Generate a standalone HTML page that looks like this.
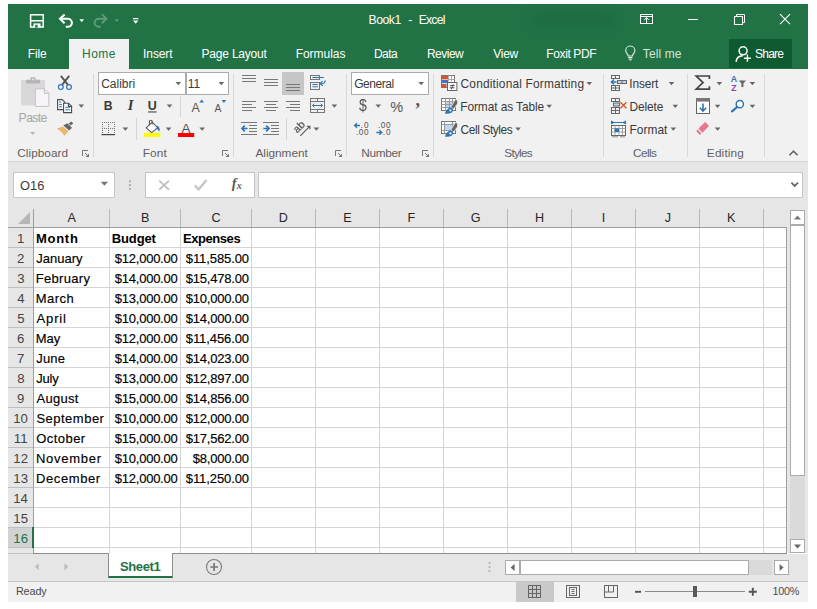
<!DOCTYPE html>
<html lang="en"><head><meta charset="utf-8"><title>Book1 - Excel</title>
<style>
html,body{margin:0;padding:0;background:#fff;}
body{width:817px;height:609px;position:relative;overflow:hidden;font-family:"Liberation Sans", sans-serif;}
.t{position:absolute;display:block;white-space:pre;line-height:20px;height:20px;font-family:"Liberation Sans", sans-serif;}
.k{-webkit-text-stroke:0.16px currentColor;}
.a{position:absolute;box-sizing:border-box;}
</style></head><body>
<div class="a" style="left:8px;top:4px;width:800px;height:65px;background:#217346;"></div>
<div class="a" style="left:69px;top:39px;width:60px;height:30px;background:#f1f1f1;"></div>
<div class="a" style="left:8px;top:4px;width:800px;height:35px;overflow:hidden;"><div class="a" style="left:522px;top:6px;width:88px;height:19px;background:#1d6a40;filter:blur(4px);opacity:.55;border-radius:8px;"></div></div>
<div class="a" style="left:729px;top:39px;width:63px;height:29px;background:#0f5b31;"></div>
<div class="a" style="left:8px;top:69px;width:800px;height:92px;background:#f1f1f1;"></div>
<div class="a" style="left:8px;top:161px;width:800px;height:1px;background:#d4d4d4;"></div>
<div class="a" style="left:8px;top:162px;width:800px;height:46px;background:#e6e6e6;"></div>
<div class="a" style="left:8px;top:208px;width:800px;height:345px;background:#e6e6e6;"></div>
<div class="a" style="left:8px;top:554px;width:800px;height:27px;background:#e6e6e6;"></div>
<div class="a" style="left:8px;top:581px;width:800px;height:1px;background:#c6c6c6;"></div>
<div class="a" style="left:8px;top:582px;width:800px;height:20px;background:#f1f1f1;"></div>
<div class="a" style="left:93px;top:74px;width:1px;height:83px;background:#d8d8d8;"></div>
<div class="a" style="left:233px;top:74px;width:1px;height:83px;background:#d8d8d8;"></div>
<div class="a" style="left:346px;top:74px;width:1px;height:83px;background:#d8d8d8;"></div>
<div class="a" style="left:433px;top:74px;width:1px;height:83px;background:#d8d8d8;"></div>
<div class="a" style="left:603px;top:74px;width:1px;height:83px;background:#d8d8d8;"></div>
<div class="a" style="left:687px;top:74px;width:1px;height:83px;background:#d8d8d8;"></div>
<div class="a" style="left:764px;top:74px;width:1px;height:83px;background:#d8d8d8;"></div>
<div class="a" style="left:180px;top:96px;width:1px;height:21px;background:#d4d4d4;"></div>
<div class="a" style="left:136px;top:118px;width:1px;height:22px;background:#d4d4d4;"></div>
<div class="a" style="left:286px;top:118px;width:1px;height:22px;background:#d4d4d4;"></div>
<div class="a" style="left:282px;top:72px;width:22px;height:23px;background:#c6c6c6;"></div>
<div class="a" style="left:98px;top:72px;width:88px;height:23px;background:#fff;border:1px solid #ababab;"></div>
<div class="a" style="left:186px;top:72px;width:43px;height:23px;background:#fff;border:1px solid #ababab;"></div>
<div class="a" style="left:351px;top:72px;width:78px;height:23px;background:#fff;border:1px solid #ababab;"></div>
<div class="a" style="left:13px;top:172px;width:102px;height:26px;background:#fff;border:1px solid #c6c6c6;"></div>
<div class="a" style="left:145px;top:172px;width:110px;height:26px;background:#fff;border:1px solid #c6c6c6;"></div>
<div class="a" style="left:258px;top:172px;width:545px;height:26px;background:#fff;border:1px solid #c6c6c6;"></div>
<div class="a" style="left:34px;top:228px;width:753px;height:326px;background:#fff;"></div>
<div class="a" style="left:8px;top:528px;width:26px;height:20px;background:#d2d2d2;"></div>
<div class="a" style="left:34px;top:247px;width:753px;height:1px;background:#d4d4d4;"></div>
<div class="a" style="left:8px;top:247px;width:25px;height:1px;background:#bfbfbf;"></div>
<div class="a" style="left:34px;top:267px;width:753px;height:1px;background:#d4d4d4;"></div>
<div class="a" style="left:8px;top:267px;width:25px;height:1px;background:#bfbfbf;"></div>
<div class="a" style="left:34px;top:287px;width:753px;height:1px;background:#d4d4d4;"></div>
<div class="a" style="left:8px;top:287px;width:25px;height:1px;background:#bfbfbf;"></div>
<div class="a" style="left:34px;top:307px;width:753px;height:1px;background:#d4d4d4;"></div>
<div class="a" style="left:8px;top:307px;width:25px;height:1px;background:#bfbfbf;"></div>
<div class="a" style="left:34px;top:327px;width:753px;height:1px;background:#d4d4d4;"></div>
<div class="a" style="left:8px;top:327px;width:25px;height:1px;background:#bfbfbf;"></div>
<div class="a" style="left:34px;top:347px;width:753px;height:1px;background:#d4d4d4;"></div>
<div class="a" style="left:8px;top:347px;width:25px;height:1px;background:#bfbfbf;"></div>
<div class="a" style="left:34px;top:367px;width:753px;height:1px;background:#d4d4d4;"></div>
<div class="a" style="left:8px;top:367px;width:25px;height:1px;background:#bfbfbf;"></div>
<div class="a" style="left:34px;top:387px;width:753px;height:1px;background:#d4d4d4;"></div>
<div class="a" style="left:8px;top:387px;width:25px;height:1px;background:#bfbfbf;"></div>
<div class="a" style="left:34px;top:407px;width:753px;height:1px;background:#d4d4d4;"></div>
<div class="a" style="left:8px;top:407px;width:25px;height:1px;background:#bfbfbf;"></div>
<div class="a" style="left:34px;top:427px;width:753px;height:1px;background:#d4d4d4;"></div>
<div class="a" style="left:8px;top:427px;width:25px;height:1px;background:#bfbfbf;"></div>
<div class="a" style="left:34px;top:447px;width:753px;height:1px;background:#d4d4d4;"></div>
<div class="a" style="left:8px;top:447px;width:25px;height:1px;background:#bfbfbf;"></div>
<div class="a" style="left:34px;top:467px;width:753px;height:1px;background:#d4d4d4;"></div>
<div class="a" style="left:8px;top:467px;width:25px;height:1px;background:#bfbfbf;"></div>
<div class="a" style="left:34px;top:487px;width:753px;height:1px;background:#d4d4d4;"></div>
<div class="a" style="left:8px;top:487px;width:25px;height:1px;background:#bfbfbf;"></div>
<div class="a" style="left:34px;top:507px;width:753px;height:1px;background:#d4d4d4;"></div>
<div class="a" style="left:8px;top:507px;width:25px;height:1px;background:#bfbfbf;"></div>
<div class="a" style="left:34px;top:527px;width:753px;height:1px;background:#d4d4d4;"></div>
<div class="a" style="left:8px;top:527px;width:25px;height:1px;background:#bfbfbf;"></div>
<div class="a" style="left:34px;top:547px;width:753px;height:1px;background:#d4d4d4;"></div>
<div class="a" style="left:8px;top:547px;width:25px;height:1px;background:#bfbfbf;"></div>
<div class="a" style="left:109px;top:228px;width:1px;height:326px;background:#d4d4d4;"></div>
<div class="a" style="left:109px;top:209px;width:1px;height:19px;background:#b9b9b9;"></div>
<div class="a" style="left:180px;top:228px;width:1px;height:326px;background:#d4d4d4;"></div>
<div class="a" style="left:180px;top:209px;width:1px;height:19px;background:#b9b9b9;"></div>
<div class="a" style="left:251px;top:228px;width:1px;height:326px;background:#d4d4d4;"></div>
<div class="a" style="left:251px;top:209px;width:1px;height:19px;background:#b9b9b9;"></div>
<div class="a" style="left:315px;top:228px;width:1px;height:326px;background:#d4d4d4;"></div>
<div class="a" style="left:315px;top:209px;width:1px;height:19px;background:#b9b9b9;"></div>
<div class="a" style="left:379px;top:228px;width:1px;height:326px;background:#d4d4d4;"></div>
<div class="a" style="left:379px;top:209px;width:1px;height:19px;background:#b9b9b9;"></div>
<div class="a" style="left:443px;top:228px;width:1px;height:326px;background:#d4d4d4;"></div>
<div class="a" style="left:443px;top:209px;width:1px;height:19px;background:#b9b9b9;"></div>
<div class="a" style="left:507px;top:228px;width:1px;height:326px;background:#d4d4d4;"></div>
<div class="a" style="left:507px;top:209px;width:1px;height:19px;background:#b9b9b9;"></div>
<div class="a" style="left:571px;top:228px;width:1px;height:326px;background:#d4d4d4;"></div>
<div class="a" style="left:571px;top:209px;width:1px;height:19px;background:#b9b9b9;"></div>
<div class="a" style="left:635px;top:228px;width:1px;height:326px;background:#d4d4d4;"></div>
<div class="a" style="left:635px;top:209px;width:1px;height:19px;background:#b9b9b9;"></div>
<div class="a" style="left:699px;top:228px;width:1px;height:326px;background:#d4d4d4;"></div>
<div class="a" style="left:699px;top:209px;width:1px;height:19px;background:#b9b9b9;"></div>
<div class="a" style="left:763px;top:228px;width:1px;height:326px;background:#d4d4d4;"></div>
<div class="a" style="left:763px;top:209px;width:1px;height:19px;background:#b9b9b9;"></div>
<div class="a" style="left:8px;top:227px;width:779px;height:1px;background:#9e9e9e;"></div>
<div class="a" style="left:33px;top:209px;width:1px;height:345px;background:#9e9e9e;"></div>
<div class="a" style="left:32px;top:527px;width:2px;height:21px;background:#217346;"></div>
<div class="a" style="left:786px;top:228px;width:1px;height:326px;background:#9e9e9e;"></div>
<div class="a" style="left:8px;top:553px;width:25px;height:1px;background:#c2c2c2;"></div>
<div class="a" style="left:33px;top:553px;width:76px;height:1px;background:#8e8e8e;"></div>
<div class="a" style="left:173px;top:553px;width:614px;height:1px;background:#8e8e8e;"></div>
<div class="a" style="left:790px;top:210px;width:15px;height:343px;background:#dadada;"></div>
<div class="a" style="left:790px;top:210px;width:15px;height:15px;background:#fff;border:1px solid #ababab;"></div>
<div class="a" style="left:790px;top:225px;width:15px;height:251px;background:#fff;border:1px solid #ababab;"></div>
<div class="a" style="left:790px;top:539px;width:15px;height:14px;background:#fff;border:1px solid #ababab;"></div>
<div class="a" style="left:505px;top:560px;width:267px;height:15px;background:#dadada;"></div>
<div class="a" style="left:505px;top:560px;width:15px;height:15px;background:#fff;border:1px solid #ababab;"></div>
<div class="a" style="left:520px;top:560px;width:229px;height:15px;background:#fff;border:1px solid #ababab;"></div>
<div class="a" style="left:774px;top:560px;width:15px;height:15px;background:#fff;border:1px solid #ababab;"></div>
<div class="a" style="left:108px;top:553px;width:65px;height:25px;background:#fff;border-left:1px solid #8e8e8e;border-right:1px solid #8e8e8e;border-bottom:2px solid #217346;"></div>
<div class="a" style="left:516px;top:582px;width:38px;height:20px;background:#c9c9c9;"></div>
<div class="a" style="left:645px;top:591px;width:100px;height:1px;background:#8a8a8a;"></div>
<div class="a" style="left:693px;top:586px;width:4px;height:11px;background:#5a5a5a;"></div>
<svg class="a" style="left:0;top:0" width="817" height="609" viewBox="0 0 817 609">
<g fill="none" stroke="#fff" stroke-width="1.5"><rect x="30.6" y="14.8" width="12.6" height="12.2"/><path d="M30.6,20.8H43.2"/></g>
<rect x="33.4" y="23.4" width="7.2" height="4" fill="#fff"/><rect x="35.2" y="24.8" width="2.4" height="2.9" fill="#217346"/>
<g fill="none" stroke="#fff" stroke-width="2.1" stroke-linejoin="miter"><path d="M64.6,14.4L60,18.8L64.6,23.2"/><path d="M60.4,18.8H67.6a4.3,4 0 0 1 0,8H65.8"/></g>
<path d="M79.40,19.20h4.6l-2.30,3.0z" fill="#fff"/>
<g fill="none" stroke="#5d9b79" stroke-width="1.9"><path d="M101.9,14.4L106.5,18.8L101.9,23.2"/><path d="M106.1,18.8H98.9a4.3,4 0 0 0 0,8H100.7"/></g>
<path d="M114.60,19.30h4.4l-2.20,2.8z" fill="#5d9b79"/>
<rect x="133" y="18" width="5.4" height="1.2" fill="#fff"/>
<path d="M133.00,20.60h5.4l-2.70,3.2z" fill="#fff"/>
<g fill="none" stroke="#fff" stroke-width="1"><rect x="640.5" y="14.5" width="12" height="9"/><path d="M640.5,16.5h12"/><path d="M646.5,23.5v-6M644.2,20l2.3,-2.3l2.3,2.3"/></g>
<rect x="688" y="19" width="10" height="1" fill="#fff"/>
<g fill="none" stroke="#fff" stroke-width="1"><path d="M736.5,16.5v-2h8v8h-2"/><rect x="734.5" y="16.5" width="8" height="8"/></g>
<path d="M780,14.2l10,10M790,14.2l-10,10" stroke="#fff" stroke-width="1.1" fill="none"/>
<g fill="none" stroke="#e4efe8" stroke-width="1.1"><path d="M628.2,56c0,-1.8 -2.5,-2.6 -2.5,-5.4a4.6,4.6 0 0 1 9.2,0c0,2.8 -2.5,3.6 -2.5,5.4z"/><path d="M628.2,57.7h4.2" stroke-width="1.5"/><path d="M628.9,59.8h2.8"/></g>
<g fill="none" stroke="#fff" stroke-width="1.5"><circle cx="743.1" cy="50.8" r="4"/><path d="M736.1,61.8c0.4,-3.8 2.8,-5.8 6.6,-6"/><path d="M747.4,54.6v7.2M743.9,58.2h7" stroke-width="1.4"/></g>
<rect x="21" y="80" width="24" height="25.4" rx="1.6" fill="#dad7da"/>
<path d="M26,83.6v-3.8h4.4v-1.4a1.2,1.2 0 0 1 1.2,-1.2h2.8a1.2,1.2 0 0 1 1.2,1.2v1.4h4.4v3.8z" fill="#b7b4b8"/>
<rect x="32.2" y="78.6" width="1.8" height="1.6" fill="#efecef"/>
<path d="M35.3,88.8h9l4.6,4.6v13h-13.6z" fill="#f7f4f7" stroke="#c3c1c3" stroke-width="1"/>
<path d="M44.3,88.8v4.6h4.6" fill="none" stroke="#c3c1c3" stroke-width="1"/>
<path d="M30.20,131.90h5l-2.50,3z" fill="#b5b5b5"/>
<g fill="none" stroke="#555" stroke-width="1.9"><path d="M60.9,75.8L68,84.8M69.2,75.8L62.1,84.8"/></g>
<g fill="none" stroke="#2e75b6" stroke-width="1.2"><circle cx="60.8" cy="87.1" r="2.4"/><circle cx="69" cy="87.1" r="2.4"/></g>
<g fill="#fff" stroke="#4a4a4a" stroke-width="1.1"><path d="M57.6,99.6h4.6l2.6,2.6v7.4h-7.2z"/><path d="M63.6,103.2h5l3,3v6.4h-8z"/><path d="M68.4,103.4v3h3" fill="none"/></g>
<g stroke="#2e75b6" stroke-width="1"><path d="M59,102h2M59,104.4h3M59,106.8h3M65.4,107.3h4.6M65.4,109.8h4.6"/></g>
<path d="M78.50,104.60h5.6l-2.80,3.2z" fill="#666"/>
<path d="M57,128.5L62.8,126.5L68.6,131.2L64.4,135.8Q61,131 57,128.5z" fill="#e9b96e"/>
<path d="M63.3,125.6L67.3,123.2L72,127.8L69.2,130.4z" fill="#666"/>
<path d="M68.6,123.4L71.3,121.6L73.3,123.5L70.6,125.6z" fill="#666"/>
<path d="M82.5,156V150.5H88" fill="none" stroke="#777" stroke-width="1"/>
<path d="M85,153L88,156" stroke="#777" stroke-width="1"/>
<path d="M89,153.5V157H85.5z" fill="#777"/>
<path d="M175.50,82.10h5.6l-2.80,3.2z" fill="#666"/>
<path d="M218.60,82.10h5.6l-2.80,3.2z" fill="#666"/>
<rect x="148" y="111.4" width="8.6" height="1.1" fill="#444"/>
<path d="M166.70,104.60h5.6l-2.80,3.2z" fill="#666"/>
<path d="M199.4,102.6h4.6l-2.3,-3.2z" fill="#2e75b6"/>
<path d="M221.6,100h4.6l-2.3,3z" fill="#2e75b6"/>
<rect x="102" y="122" width="1" height="1" fill="#777"/>
<rect x="104" y="122" width="1" height="1" fill="#777"/>
<rect x="106" y="122" width="1" height="1" fill="#777"/>
<rect x="108" y="122" width="1" height="1" fill="#777"/>
<rect x="110" y="122" width="1" height="1" fill="#777"/>
<rect x="112" y="122" width="1" height="1" fill="#777"/>
<rect x="114" y="122" width="1" height="1" fill="#777"/>
<rect x="102" y="128" width="1" height="1" fill="#777"/>
<rect x="104" y="128" width="1" height="1" fill="#777"/>
<rect x="106" y="128" width="1" height="1" fill="#777"/>
<rect x="108" y="128" width="1" height="1" fill="#777"/>
<rect x="110" y="128" width="1" height="1" fill="#777"/>
<rect x="112" y="128" width="1" height="1" fill="#777"/>
<rect x="114" y="128" width="1" height="1" fill="#777"/>
<rect x="102" y="124" width="1" height="1" fill="#777"/>
<rect x="102" y="126" width="1" height="1" fill="#777"/>
<rect x="102" y="128" width="1" height="1" fill="#777"/>
<rect x="102" y="130" width="1" height="1" fill="#777"/>
<rect x="102" y="132" width="1" height="1" fill="#777"/>
<rect x="108" y="124" width="1" height="1" fill="#777"/>
<rect x="108" y="126" width="1" height="1" fill="#777"/>
<rect x="108" y="128" width="1" height="1" fill="#777"/>
<rect x="108" y="130" width="1" height="1" fill="#777"/>
<rect x="108" y="132" width="1" height="1" fill="#777"/>
<rect x="114" y="124" width="1" height="1" fill="#777"/>
<rect x="114" y="126" width="1" height="1" fill="#777"/>
<rect x="114" y="128" width="1" height="1" fill="#777"/>
<rect x="114" y="130" width="1" height="1" fill="#777"/>
<rect x="114" y="132" width="1" height="1" fill="#777"/>
<rect x="101.5" y="134" width="13.6" height="1.2" fill="#444"/>
<path d="M122.60,127.60h5.6l-2.80,3.2z" fill="#666"/>
<g fill="#fff" stroke="#555" stroke-width="1.1"><path d="M146.2,127.8L152.2,122.2L157.8,127.6L151.6,132.6z"/><path d="M152.2,124.6v-3a1.4,1.4 0 0 0 -2.8,0v3.6" fill="none"/></g>
<path d="M157.6,125.6q3.4,3.4 1.6,6q-1.4,-1.8 -2.8,-3.6z" fill="#2e75b6"/>
<rect x="144" y="133" width="16.4" height="4" fill="#ffff00"/>
<path d="M165.80,127.60h5.6l-2.80,3.2z" fill="#666"/>
<rect x="178" y="133" width="16.2" height="4" fill="#ff0000"/>
<path d="M199.40,127.60h5.6l-2.80,3.2z" fill="#666"/>
<path d="M222.5,156V150.5H228" fill="none" stroke="#777" stroke-width="1"/>
<path d="M225,153L228,156" stroke="#777" stroke-width="1"/>
<path d="M229,153.5V157H225.5z" fill="#777"/>
<rect x="242" y="75" width="14" height="1" fill="#777"/>
<rect x="242" y="78" width="14" height="1" fill="#777"/>
<rect x="242" y="81" width="14" height="1" fill="#777"/>
<rect x="264" y="79" width="14" height="1" fill="#777"/>
<rect x="264" y="82" width="14" height="1" fill="#777"/>
<rect x="264" y="85" width="14" height="1" fill="#777"/>
<rect x="286" y="84" width="14" height="1" fill="#777"/>
<rect x="286" y="87" width="14" height="1" fill="#777"/>
<rect x="286" y="90" width="14" height="1" fill="#777"/>
<g fill="none" stroke="#777" stroke-width="1"><rect x="310.5" y="75.5" width="9" height="4"/><rect x="310.5" y="82.5" width="9" height="7"/></g>
<g fill="none" stroke="#2e75b6" stroke-width="1.1"><path d="M312.4,77.5h11.4"/><path d="M312.4,84.5h5.4M312.4,86.8h5.4"/><path d="M325.2,80.2q0.4,3.6 -4.6,3.5"/><path d="M322.6,81.2l-2.6,2.5l2.8,2" stroke-width="1.2"/></g>
<rect x="242" y="101" width="14" height="1" fill="#777"/>
<rect x="264" y="101" width="14" height="1" fill="#777"/>
<rect x="286" y="101" width="14" height="1" fill="#777"/>
<rect x="242" y="104" width="10" height="1" fill="#777"/>
<rect x="266" y="104" width="10" height="1" fill="#777"/>
<rect x="290" y="104" width="10" height="1" fill="#777"/>
<rect x="242" y="107" width="14" height="1" fill="#777"/>
<rect x="264" y="107" width="14" height="1" fill="#777"/>
<rect x="286" y="107" width="14" height="1" fill="#777"/>
<rect x="242" y="110" width="10" height="1" fill="#777"/>
<rect x="266" y="110" width="10" height="1" fill="#777"/>
<rect x="290" y="110" width="10" height="1" fill="#777"/>
<g fill="none" stroke="#777" stroke-width="1"><rect x="310.5" y="98.5" width="14" height="14"/><path d="M310.5,101.5h14M310.5,109.5h14M317.5,98.5v3M317.5,109.5v3"/></g>
<g fill="none" stroke="#2e75b6" stroke-width="1"><path d="M312.5,105.5h10M314.3,103.7l-1.8,1.8l1.8,1.8M320.7,103.7l1.8,1.8l-1.8,1.8"/></g>
<path d="M331.60,104.60h5.6l-2.80,3.2z" fill="#666"/>
<rect x="241" y="122" width="16" height="1" fill="#777"/>
<rect x="241" y="134" width="16" height="1" fill="#777"/>
<rect x="249" y="125" width="8" height="1" fill="#777"/>
<rect x="249" y="128" width="8" height="1" fill="#777"/>
<rect x="249" y="131" width="8" height="1" fill="#777"/>
<path d="M247.6,128.5h-5.4M244.8,125.7l-2.8,2.8l2.8,2.8" fill="none" stroke="#2e75b6" stroke-width="1.7"/>
<rect x="263" y="122" width="16" height="1" fill="#777"/>
<rect x="263" y="134" width="16" height="1" fill="#777"/>
<rect x="271" y="125" width="8" height="1" fill="#777"/>
<rect x="271" y="128" width="8" height="1" fill="#777"/>
<rect x="271" y="131" width="8" height="1" fill="#777"/>
<path d="M263.4,128.5h5.4M266.2,125.7l2.8,2.8l-2.8,2.8" fill="none" stroke="#2e75b6" stroke-width="1.7"/>
<text x="0" y="0" transform="translate(297.3,133.5) rotate(-45)" opacity="0.99" font-family="Liberation Sans, sans-serif" font-size="10.5" fill="#555" stroke="#555" stroke-width="0.25">ab</text>
<path d="M300.3,135.8L309.7,126.4M306.8,126.2h3.1v3.1" fill="none" stroke="#555" stroke-width="1.1"/>
<path d="M313.60,127.60h5.6l-2.80,3.2z" fill="#666"/>
<path d="M335.5,156V150.5H341" fill="none" stroke="#777" stroke-width="1"/>
<path d="M338,153L341,156" stroke="#777" stroke-width="1"/>
<path d="M342,153.5V157H338.5z" fill="#777"/>
<path d="M418.40,82.10h5.6l-2.80,3.2z" fill="#666"/>
<path d="M375.50,104.60h5.6l-2.80,3.2z" fill="#666"/>
<path d="M360,125.5h-5M357,123.3l-2.4,2.2l2.4,2.2" fill="none" stroke="#2e75b6" stroke-width="1.3"/>
<path d="M376.4,132.5h5M379.4,130.3l2.4,2.2l-2.4,2.2" fill="none" stroke="#2e75b6" stroke-width="1.3"/>
<path d="M422.5,156V150.5H428" fill="none" stroke="#777" stroke-width="1"/>
<path d="M425,153L428,156" stroke="#777" stroke-width="1"/>
<path d="M429,153.5V157H425.5z" fill="#777"/>
<rect x="441.5" y="75.5" width="13" height="12" fill="#fff" stroke="#777"/>
<rect x="442" y="76" width="6" height="3.4" fill="#d9532c"/><rect x="442" y="80" width="6" height="3.2" fill="#4472c4"/><rect x="442" y="84" width="4.6" height="3.2" fill="#d9532c"/>
<path d="M448.5,75.5v6M451.5,75.5v6M448.5,79.5h6" stroke="#aaa" fill="none"/>
<rect x="447.5" y="82.5" width="9.4" height="8" fill="#fff" stroke="#666"/>
<path d="M449.8,85.6h4.8M449.8,87.8h4.8M453.4,84.2l-2.2,5" stroke="#444" stroke-width="0.9" fill="none"/>
<rect x="441.5" y="98.5" width="14" height="12" fill="#fff" stroke="#777"/>
<rect x="446" y="102" width="7" height="6" fill="#bdd7ee"/>
<path d="M441.5,101.5h14M441.5,104.5h14M441.5,107.5h14M445.5,98.5v12M449.5,98.5v12M452.5,98.5v12" stroke="#999" stroke-width="1" fill="none"/>
<path d="M455.4,99.4L457.6,100.2L457.6,103.8L453.6,109L450.8,107z" fill="#666" stroke="#f1f1f1" stroke-width="0.8"/>
<path d="M445,113.8q0.8,-4.4 4,-5.8q2.4,-1 3.7,0.6q1.2,2 -0.8,3.8q-1.6,1.2 -6.9,1.4z" fill="#2e75b6"/>
<circle cx="450.4" cy="110.4" r="1.1" fill="#fff"/>
<rect x="441.5" y="121.5" width="14" height="12" fill="#fff" stroke="#777"/>
<rect x="445" y="125" width="8" height="6" fill="#bdd7ee"/>
<path d="M441.5,124.5h14M441.5,130.5h14M444.5,121.5v12M452.5,121.5v12" stroke="#999" stroke-width="1" fill="none"/>
<path d="M455.4,122.4L457.6,123.2L457.6,126.8L453.6,132L450.8,130z" fill="#666" stroke="#f1f1f1" stroke-width="0.8"/>
<path d="M445,136.8q0.8,-4.4 4,-5.8q2.4,-1 3.7,0.6q1.2,2 -0.8,3.8q-1.6,1.2 -6.9,1.4z" fill="#2e75b6"/>
<circle cx="450.4" cy="133.4" r="1.1" fill="#fff"/>
<path d="M586.50,82.10h5.6l-2.80,3.2z" fill="#666"/>
<path d="M546.40,104.80h5.6l-2.80,3.2z" fill="#666"/>
<path d="M515.30,127.60h5.6l-2.80,3.2z" fill="#666"/>
<g fill="none" stroke="#666" stroke-width="1"><rect x="611.5" y="75.5" width="8" height="3"/><path d="M615.5,75.5v3"/><rect x="611.5" y="85.5" width="8" height="5"/><path d="M615.5,85.5v5M611.5,88h8"/></g>
<rect x="617.5" y="80.5" width="9" height="3" fill="#bdd7ee" stroke="#666"/><path d="M622,80.5v3" stroke="#666"/>
<path d="M616.6,82h-4.6M614,79.6l-2.6,2.4l2.6,2.4" fill="none" stroke="#2e75b6" stroke-width="1.4"/>
<g fill="none" stroke="#666" stroke-width="1"><rect x="611.5" y="98.5" width="8" height="3"/><path d="M615.5,98.5v3"/><rect x="611.5" y="107.5" width="8" height="6"/><path d="M615.5,107.5v6M611.5,110.5h8"/></g>
<rect x="613.5" y="103" width="6" height="3" fill="#bdd7ee" stroke="#666"/>
<path d="M620.4,102.2l6,6M626.4,102.2l-6,6" stroke="#d9532c" stroke-width="1.3" fill="none"/>
<path d="M611,122.5h14.6M611.5,120.8v3.4M625.5,120.8v3.4M613.2,121l-1.4,1.5l1.4,1.5M623.8,121l1.4,1.5l-1.4,1.5" stroke="#2e75b6" stroke-width="1" fill="none"/>
<rect x="611.5" y="125.5" width="14" height="10" fill="#fff" stroke="#666"/>
<path d="M611.5,128.5h14M611.5,132h14M615,125.5v10M619,125.5v10M622.5,125.5v10" stroke="#999" stroke-width="0.9" fill="none"/>
<rect x="614.6" y="128.4" width="4.4" height="3.6" fill="#2e75b6"/>
<path d="M612,136.8h6M620,136.8h5" stroke="#888" stroke-width="0.9"/>
<path d="M668.70,82.10h5.6l-2.80,3.2z" fill="#666"/>
<path d="M672.50,104.80h5.6l-2.80,3.2z" fill="#666"/>
<path d="M670.50,127.60h5.6l-2.80,3.2z" fill="#666"/>
<path d="M709.4,79v-3h-13.2l6.8,6.6l-6.8,6.6h13.2v-3" fill="none" stroke="#444" stroke-width="1.7" stroke-linejoin="miter"/>
<path d="M716.60,82.10h5.6l-2.80,3.2z" fill="#666"/>
<path d="M738.8,80.4h7.2l-2.6,3v3.6h-2v-3.6z" fill="#666"/>
<path d="M749.60,82.10h5.6l-2.80,3.2z" fill="#666"/>
<rect x="696.5" y="98.5" width="13" height="15" fill="#fff" stroke="#666"/><rect x="696" y="98" width="14" height="3.6" fill="#777"/>
<path d="M703,103.4v7.4M699.8,107.8l3.2,3.2l3.2,-3.2" fill="none" stroke="#2e75b6" stroke-width="1.6"/>
<path d="M714.80,104.80h5.6l-2.80,3.2z" fill="#666"/>
<circle cx="739.8" cy="104.2" r="3.6" fill="#fff" stroke="#2e75b6" stroke-width="1.5"/><path d="M737.2,107l-5.2,4.4" stroke="#2e75b6" stroke-width="2.2" stroke-linecap="round"/>
<path d="M749.60,104.80h5.6l-2.80,3.2z" fill="#666"/>
<path d="M698.4,128.6L705.2,122L709,126L702.4,132.8z" fill="#e8788f"/><path d="M697.6,129.6L701.4,133.6L699.8,135L696.2,131z" fill="#e8788f"/>
<path d="M714.80,127.60h5.6l-2.80,3.2z" fill="#666"/>
<path d="M789.4,155.2l4.1,-4.1l4.1,4.1" fill="none" stroke="#666" stroke-width="1.6"/>
<path d="M100.70,181.80h7.4l-3.70,4.0z" fill="#777"/>
<rect x="129" y="180.4" width="1.8" height="1.8" fill="#a6a6a6"/>
<rect x="129" y="184.2" width="1.8" height="1.8" fill="#a6a6a6"/>
<rect x="129" y="188" width="1.8" height="1.8" fill="#a6a6a6"/>
<path d="M159.2,180.6l9.8,9.2M169,180.6l-9.8,9.2" stroke="#c2c2c2" stroke-width="1.9" fill="none"/>
<path d="M194.8,185.4l3.8,4l8,-9.4" stroke="#c8c8c8" stroke-width="2.4" fill="none"/>
<path d="M791.4,182.6l3.3,3.3l3.3,-3.3" fill="none" stroke="#666" stroke-width="1.8"/>
<path d="M30,212v12h-12z" fill="#b6b6b6"/>
<path d="M794,219.6h7l-3.5,-4z" fill="#777"/>
<path d="M794,544.4h7l-3.5,4z" fill="#666"/>
<path d="M514.6,564v7l-4,-3.5z" fill="#666"/>
<path d="M779.6,564v7l4,-3.5z" fill="#666"/>
<rect x="488.6" y="562.2" width="1.8" height="1.8" fill="#b0b0b0"/>
<rect x="488.6" y="566.2" width="1.8" height="1.8" fill="#b0b0b0"/>
<rect x="488.6" y="570.2" width="1.8" height="1.8" fill="#b0b0b0"/>
<path d="M38.8,563.2v7l-4,-3.5z" fill="#bdbdbd"/><path d="M64.4,563.2v7l4,-3.5z" fill="#bdbdbd"/>
<circle cx="214" cy="567" r="7.5" fill="none" stroke="#7a7a7a" stroke-width="1.1"/><path d="M210.2,567h7.8M214.1,563.1v7.8" stroke="#777" stroke-width="1.7"/>
<g fill="none" stroke="#666" stroke-width="1"><rect x="528.5" y="585.5" width="12" height="12"/><path d="M528.5,589.5h12M528.5,593.5h12M532.5,585.5v12M536.5,585.5v12"/></g>
<g fill="none" stroke="#666" stroke-width="1"><rect x="566.5" y="585.5" width="13" height="12"/><rect x="569.5" y="587.5" width="7" height="8"/><path d="M571.5,589.5h3M571.5,591.5h3M571.5,593.5h3"/></g>
<g fill="none" stroke="#666" stroke-width="1"><rect x="604.5" y="585.5" width="13" height="12"/><path d="M608.5,585.5v6.5M613.5,585.5v6.5M604.5,592h9" /></g>
<path d="M635,591.8h6" stroke="#555" stroke-width="1.9"/>
<path d="M748.8,591.8h8M752.8,587.8v8" stroke="#555" stroke-width="1.9"/>
</svg>
<div id="txt" style="position:absolute;left:0;top:0;width:817px;height:609px;">
<span class="t" style='left:368.60px;top:10.00px;font-size:12.2px;color:#fff;letter-spacing:-0.477px;'>Book1</span>
<span class="t" style='left:408.20px;top:10.00px;font-size:12.2px;color:#fff;'>-</span>
<span class="t" style='left:418.70px;top:10.00px;font-size:12.2px;color:#fff;letter-spacing:-0.781px;'>Excel</span>
<span class="t" style='left:27.65px;top:44.00px;font-size:12.0px;color:#fff;letter-spacing:-0.087px;'>File</span>
<span class="t" style='left:82.05px;top:44.00px;font-size:12.0px;color:#217346;letter-spacing:0.421px;'>Home</span>
<span class="t" style='left:143.10px;top:44.00px;font-size:12.0px;color:#fff;letter-spacing:-0.106px;'>Insert</span>
<span class="t" style='left:201.55px;top:44.00px;font-size:12.0px;color:#fff;letter-spacing:-0.205px;'>Page Layout</span>
<span class="t" style='left:295.65px;top:44.00px;font-size:12.0px;color:#fff;letter-spacing:-0.037px;'>Formulas</span>
<span class="t" style='left:374.05px;top:44.00px;font-size:12.0px;color:#fff;letter-spacing:-0.608px;'>Data</span>
<span class="t" style='left:426.95px;top:44.00px;font-size:12.0px;color:#fff;letter-spacing:-0.506px;'>Review</span>
<span class="t" style='left:493.35px;top:44.00px;font-size:12.0px;color:#fff;letter-spacing:-0.326px;'>View</span>
<span class="t" style='left:546.35px;top:44.00px;font-size:12.0px;color:#fff;letter-spacing:-0.401px;'>Foxit PDF</span>
<span class="t" style='left:642.75px;top:44.00px;font-size:12.0px;color:#d5e6dc;letter-spacing:0.127px;'>Tell me</span>
<span class="t" style='left:755.10px;top:44.00px;font-size:12.0px;color:#fff;letter-spacing:-0.774px;'>Share</span>
<span class="t" style='left:18.60px;top:108.00px;font-size:12.2px;color:#a6a6a6;letter-spacing:-0.590px;'>Paste</span>
<span class="t" style='left:17.25px;top:143.00px;font-size:11.8px;color:#606060;letter-spacing:0.044px;'>Clipboard</span>
<span class="t" style='left:101.20px;top:74.00px;font-size:12px;color:#3a3a3a;letter-spacing:-0.007px;'>Calibri</span>
<span class="t" style='left:187.70px;top:74.00px;font-size:12px;color:#3a3a3a;'>11</span>
<span class="t" style='left:103.80px;top:96.00px;font-size:12.2px;color:#3a3a3a;font-weight:bold;'>B</span>
<span class="t" style='left:127.63px;top:95.00px;font-size:14.6px;color:#3a3a3a;font-weight:bold;font-style:italic;font-family:"Liberation Serif", serif;'>I</span>
<span class="t" style='left:147.65px;top:96.00px;font-size:12.5px;color:#3a3a3a;font-weight:bold;'>U</span>
<span class="t" style='left:191.60px;top:98.00px;font-size:12.4px;color:#555;'>A</span>
<span class="t" style='left:214.50px;top:99.00px;font-size:10.3px;color:#555;'>A</span>
<span class="t" style='left:181.50px;top:119.00px;font-size:13.5px;color:#555;'>A</span>
<span class="t" style='left:142.85px;top:143.00px;font-size:11.8px;color:#606060;letter-spacing:0.072px;'>Font</span>
<span class="t" style='left:255.40px;top:143.00px;font-size:11.8px;color:#606060;'>Alignment</span>
<span class="t" style='left:354.20px;top:74.00px;font-size:12px;color:#3a3a3a;letter-spacing:-0.454px;'>General</span>
<span class="t" style='left:358.90px;top:95.00px;font-size:16.4px;color:#555;transform:scaleX(.86);transform-origin:0 50%;'>$</span>
<span class="t" style='left:390.35px;top:97.00px;font-size:14.5px;color:#555;'>%</span>
<span class="t" style='left:415.60px;top:90.00px;font-size:18px;color:#555;font-weight:bold;font-family:"Liberation Serif", serif;'>,</span>
<span class="t" style='left:361.25px;top:143.00px;font-size:11.8px;color:#606060;letter-spacing:-0.288px;'>Number</span>
<span class="t" style='left:460.60px;top:74.00px;font-size:11.9px;color:#3a3a3a;letter-spacing:0.181px;'>Conditional Formatting</span>
<span class="t" style='left:460.25px;top:97.00px;font-size:11.9px;color:#3a3a3a;letter-spacing:-0.082px;'>Format as Table</span>
<span class="t" style='left:460.60px;top:120.00px;font-size:11.9px;color:#3a3a3a;letter-spacing:-0.401px;'>Cell Styles</span>
<span class="t" style='left:504.30px;top:143.00px;font-size:11.8px;color:#606060;letter-spacing:-0.767px;'>Styles</span>
<span class="t" style='left:629.35px;top:74.00px;font-size:11.9px;color:#3a3a3a;letter-spacing:-0.131px;'>Insert</span>
<span class="t" style='left:629.45px;top:97.00px;font-size:11.9px;color:#3a3a3a;letter-spacing:-0.106px;'>Delete</span>
<span class="t" style='left:629.45px;top:120.00px;font-size:11.9px;color:#3a3a3a;letter-spacing:0.064px;'>Format</span>
<span class="t" style='left:633.05px;top:143.00px;font-size:11.8px;color:#606060;letter-spacing:-0.619px;'>Cells</span>
<span class="t" style='left:706.85px;top:143.00px;font-size:11.8px;color:#606060;letter-spacing:0.164px;'>Editing</span>
<span class="t" style='left:730.80px;top:69.00px;font-size:8.8px;color:#2e75b6;font-weight:bold;'>A</span>
<span class="t" style='left:731.35px;top:78.00px;font-size:8.6px;color:#8e44ad;font-weight:bold;'>Z</span>
<span class="t" style='left:360.50px;top:116.00px;font-size:8.2px;color:#555;letter-spacing:1.172px;'>.0</span>
<span class="t" style='left:355.90px;top:123.00px;font-size:8.2px;color:#555;letter-spacing:0.606px;'>.00</span>
<span class="t" style='left:377.90px;top:116.00px;font-size:8.2px;color:#555;letter-spacing:0.606px;'>.00</span>
<span class="t" style='left:382.70px;top:123.00px;font-size:8.2px;color:#555;letter-spacing:0.972px;'>.0</span>
<span class="t" style='left:20.10px;top:176.00px;font-size:12.8px;color:#3a3a3a;letter-spacing:0.062px;'>O16</span>
<span class="t" style='left:231.80px;top:173.00px;font-size:14.5px;color:#5a5a5a;font-weight:bold;font-style:italic;font-family:"Liberation Serif", serif;'>f</span>
<span class="t" style='left:236.75px;top:176.00px;font-size:10px;color:#5a5a5a;font-weight:bold;font-style:italic;font-family:"Liberation Serif", serif;'>x</span>
<span class="t" style='left:67.60px;top:208.00px;font-size:12.6px;color:#262626;'>A</span>
<span class="t" style='left:140.93px;top:208.00px;font-size:12.6px;color:#262626;'>B</span>
<span class="t" style='left:211.57px;top:208.00px;font-size:12.6px;color:#262626;'>C</span>
<span class="t" style='left:278.85px;top:208.00px;font-size:12.6px;color:#262626;'>D</span>
<span class="t" style='left:343.15px;top:208.00px;font-size:12.6px;color:#262626;'>E</span>
<span class="t" style='left:407.50px;top:208.00px;font-size:12.6px;color:#262626;'>F</span>
<span class="t" style='left:470.85px;top:208.00px;font-size:12.6px;color:#262626;'>G</span>
<span class="t" style='left:535.05px;top:208.00px;font-size:12.6px;color:#262626;'>H</span>
<span class="t" style='left:601.85px;top:208.00px;font-size:12.6px;color:#262626;'>I</span>
<span class="t" style='left:664.83px;top:208.00px;font-size:12.6px;color:#262626;'>J</span>
<span class="t" style='left:726.95px;top:208.00px;font-size:12.6px;color:#262626;'>K</span>
<span class="t" style='left:16.98px;top:229.00px;font-size:13.2px;color:#444;'>1</span>
<span class="t" style='left:17.09px;top:249.00px;font-size:13.2px;color:#444;'>2</span>
<span class="t" style='left:17.19px;top:269.00px;font-size:13.2px;color:#444;'>3</span>
<span class="t" style='left:17.19px;top:289.00px;font-size:13.2px;color:#444;'>4</span>
<span class="t" style='left:17.19px;top:309.00px;font-size:13.2px;color:#444;'>5</span>
<span class="t" style='left:17.09px;top:329.00px;font-size:13.2px;color:#444;'>6</span>
<span class="t" style='left:17.09px;top:349.00px;font-size:13.2px;color:#444;'>7</span>
<span class="t" style='left:17.19px;top:369.00px;font-size:13.2px;color:#444;'>8</span>
<span class="t" style='left:17.09px;top:389.00px;font-size:13.2px;color:#444;'>9</span>
<span class="t" style='left:13.21px;top:409.00px;font-size:13.2px;color:#444;'>10</span>
<span class="t" style='left:13.80px;top:429.00px;font-size:13.2px;color:#444;'>11</span>
<span class="t" style='left:13.31px;top:449.00px;font-size:13.2px;color:#444;'>12</span>
<span class="t" style='left:13.31px;top:469.00px;font-size:13.2px;color:#444;'>13</span>
<span class="t" style='left:13.21px;top:489.00px;font-size:13.2px;color:#444;'>14</span>
<span class="t" style='left:13.31px;top:509.00px;font-size:13.2px;color:#444;'>15</span>
<span class="t" style='left:13.31px;top:529.00px;font-size:13.2px;color:#217346;'>16</span>
<span class="t" style='left:35.99px;top:229.00px;font-size:13.0px;color:#000;letter-spacing:0.715px;font-weight:bold;'>Month</span>
<span class="t" style='left:111.79px;top:229.00px;font-size:13.0px;color:#000;letter-spacing:-0.139px;font-weight:bold;'>Budget</span>
<span class="t" style='left:183.09px;top:229.00px;font-size:13.0px;color:#000;letter-spacing:-0.452px;font-weight:bold;'>Expenses</span>
<span class="t k" style='left:36.20px;top:249.00px;font-size:13.0px;color:#000;letter-spacing:0.026px;'>January</span>
<span class="t k" style='left:114.80px;top:249.00px;font-size:13.0px;color:#000;letter-spacing:-0.238px;'>$12,000.00</span>
<span class="t k" style='left:185.80px;top:249.00px;font-size:13.0px;color:#000;letter-spacing:-0.097px;'>$11,585.00</span>
<span class="t k" style='left:35.78px;top:269.00px;font-size:13.0px;color:#000;letter-spacing:0.300px;'>February</span>
<span class="t k" style='left:114.80px;top:269.00px;font-size:13.0px;color:#000;letter-spacing:-0.238px;'>$14,000.00</span>
<span class="t k" style='left:185.80px;top:269.00px;font-size:13.0px;color:#000;letter-spacing:-0.204px;'>$15,478.00</span>
<span class="t k" style='left:35.78px;top:289.00px;font-size:13.0px;color:#000;letter-spacing:0.457px;'>March</span>
<span class="t k" style='left:114.80px;top:289.00px;font-size:13.0px;color:#000;letter-spacing:-0.238px;'>$13,000.00</span>
<span class="t k" style='left:185.80px;top:289.00px;font-size:13.0px;color:#000;letter-spacing:-0.204px;'>$10,000.00</span>
<span class="t k" style='left:36.60px;top:309.00px;font-size:13.0px;color:#000;letter-spacing:0.838px;'>April</span>
<span class="t k" style='left:114.80px;top:309.00px;font-size:13.0px;color:#000;letter-spacing:-0.238px;'>$10,000.00</span>
<span class="t k" style='left:185.80px;top:309.00px;font-size:13.0px;color:#000;letter-spacing:-0.204px;'>$14,000.00</span>
<span class="t k" style='left:35.78px;top:329.00px;font-size:13.0px;color:#000;letter-spacing:-0.022px;'>May</span>
<span class="t k" style='left:114.80px;top:329.00px;font-size:13.0px;color:#000;letter-spacing:-0.238px;'>$12,000.00</span>
<span class="t k" style='left:185.80px;top:329.00px;font-size:13.0px;color:#000;letter-spacing:-0.097px;'>$11,456.00</span>
<span class="t k" style='left:36.20px;top:349.00px;font-size:13.0px;color:#000;letter-spacing:0.213px;'>June</span>
<span class="t k" style='left:114.80px;top:349.00px;font-size:13.0px;color:#000;letter-spacing:-0.238px;'>$14,000.00</span>
<span class="t k" style='left:185.80px;top:349.00px;font-size:13.0px;color:#000;letter-spacing:-0.204px;'>$14,023.00</span>
<span class="t k" style='left:36.20px;top:369.00px;font-size:13.0px;color:#000;letter-spacing:-0.205px;'>July</span>
<span class="t k" style='left:114.80px;top:369.00px;font-size:13.0px;color:#000;letter-spacing:-0.238px;'>$13,000.00</span>
<span class="t k" style='left:185.80px;top:369.00px;font-size:13.0px;color:#000;letter-spacing:-0.204px;'>$12,897.00</span>
<span class="t k" style='left:36.60px;top:389.00px;font-size:13.0px;color:#000;letter-spacing:0.277px;'>August</span>
<span class="t k" style='left:114.80px;top:389.00px;font-size:13.0px;color:#000;letter-spacing:-0.238px;'>$15,000.00</span>
<span class="t k" style='left:185.80px;top:389.00px;font-size:13.0px;color:#000;letter-spacing:-0.204px;'>$14,856.00</span>
<span class="t k" style='left:36.39px;top:409.00px;font-size:13.0px;color:#000;letter-spacing:0.497px;'>September</span>
<span class="t k" style='left:114.80px;top:409.00px;font-size:13.0px;color:#000;letter-spacing:-0.238px;'>$10,000.00</span>
<span class="t k" style='left:185.80px;top:409.00px;font-size:13.0px;color:#000;letter-spacing:-0.204px;'>$12,000.00</span>
<span class="t k" style='left:36.19px;top:429.00px;font-size:13.0px;color:#000;letter-spacing:0.455px;'>October</span>
<span class="t k" style='left:114.80px;top:429.00px;font-size:13.0px;color:#000;letter-spacing:-0.238px;'>$15,000.00</span>
<span class="t k" style='left:185.80px;top:429.00px;font-size:13.0px;color:#000;letter-spacing:-0.204px;'>$17,562.00</span>
<span class="t k" style='left:35.98px;top:449.00px;font-size:13.0px;color:#000;letter-spacing:0.745px;'>November</span>
<span class="t k" style='left:114.80px;top:449.00px;font-size:13.0px;color:#000;letter-spacing:-0.238px;'>$10,000.00</span>
<span class="t k" style='left:192.80px;top:449.00px;font-size:13.0px;color:#000;letter-spacing:-0.201px;'>$8,000.00</span>
<span class="t k" style='left:35.98px;top:469.00px;font-size:13.0px;color:#000;letter-spacing:0.602px;'>December</span>
<span class="t k" style='left:114.80px;top:469.00px;font-size:13.0px;color:#000;letter-spacing:-0.238px;'>$12,000.00</span>
<span class="t k" style='left:185.80px;top:469.00px;font-size:13.0px;color:#000;letter-spacing:-0.097px;'>$11,250.00</span>
<span class="t" style='left:120.00px;top:557.00px;font-size:13.0px;color:#217346;letter-spacing:-0.381px;font-weight:bold;'>Sheet1</span>
<span class="t" style='left:15.95px;top:581.00px;font-size:10.8px;color:#4a4a4a;letter-spacing:-0.117px;'>Ready</span>
<span class="t" style='left:772.60px;top:581.00px;font-size:10.8px;color:#4a4a4a;letter-spacing:-0.290px;'>100%</span>
</div>
</body></html>
